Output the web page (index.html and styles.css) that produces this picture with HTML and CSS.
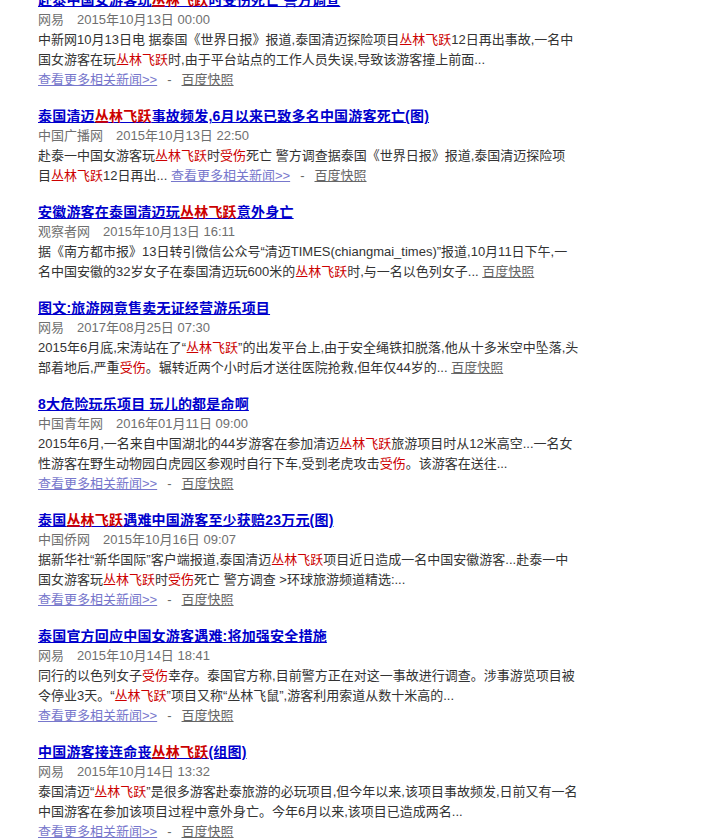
FILE: index.html
```html
<!DOCTYPE html>
<html lang="zh-CN">
<head>
<meta charset="utf-8">
<title>丛林飞跃 - 百度新闻搜索</title>
<link rel="stylesheet" href="styles.css">
</head>
<body>
<div class="results">

  <div class="result">
    <h3 class="title"><a href="#">赴泰中国女游客玩<em>丛林飞跃</em>时受伤死亡 警方调查</a></h3>
    <div class="meta"><span class="source">网易</span><span class="time">2015年10月13日 00:00</span></div>
    <div class="summary">中新网10月13日电 据泰国《世界日报》报道,泰国清迈探险项目<em>丛林飞跃</em>12日再出事故,一名中<br>国女游客在玩<em>丛林飞跃</em>时,由于平台站点的工作人员失误,导致该游客撞上前面...</div>
    <div class="links"><a class="more" href="#">查看更多相关新闻&gt;&gt;</a><span class="sep">-</span><a class="cache" href="#">百度快照</a></div>
  </div>

  <div class="result">
    <h3 class="title"><a href="#">泰国清迈<em>丛林飞跃</em>事故频发,6月以来已致多名中国游客死亡(图)</a></h3>
    <div class="meta"><span class="source">中国广播网</span><span class="time">2015年10月13日 22:50</span></div>
    <div class="summary">赴泰一中国女游客玩<em>丛林飞跃</em>时<em>受伤</em>死亡 警方调查据泰国《世界日报》报道,泰国清迈探险项<br>目<em>丛林飞跃</em>12日再出... <a class="more" href="#">查看更多相关新闻&gt;&gt;</a><span class="sep">-</span><a class="cache" href="#">百度快照</a></div>
  </div>

  <div class="result">
    <h3 class="title"><a href="#">安徽游客在泰国清迈玩<em>丛林飞跃</em>意外身亡</a></h3>
    <div class="meta"><span class="source">观察者网</span><span class="time">2015年10月13日 16:11</span></div>
    <div class="summary">据《南方都市报》13日转引微信公众号“清迈TIMES(chiangmai_times)”报道,10月11日下午,一<br>名中国安徽的32岁女子在泰国清迈玩600米的<em>丛林飞跃</em>时,与一名以色列女子... <a class="cache" href="#">百度快照</a></div>
  </div>

  <div class="result">
    <h3 class="title"><a href="#">图文:旅游网竟售卖无证经营游乐项目</a></h3>
    <div class="meta"><span class="source">网易</span><span class="time">2017年08月25日 07:30</span></div>
    <div class="summary">2015年6月底,宋涛站在了“<em>丛林飞跃</em>”的出发平台上,由于安全绳铁扣脱落,他从十多米空中坠落,头<br>部着地后,严重<em>受伤</em>。辗转近两个小时后才送往医院抢救,但年仅44岁的... <a class="cache" href="#">百度快照</a></div>
  </div>

  <div class="result">
    <h3 class="title"><a href="#">8大危险玩乐项目 玩儿的都是命啊</a></h3>
    <div class="meta"><span class="source">中国青年网</span><span class="time">2016年01月11日 09:00</span></div>
    <div class="summary">2015年6月,一名来自中国湖北的44岁游客在参加清迈<em>丛林飞跃</em>旅游项目时从12米高空...一名女<br>性游客在野生动物园白虎园区参观时自行下车,受到老虎攻击<em>受伤</em>。该游客在送往...</div>
    <div class="links"><a class="more" href="#">查看更多相关新闻&gt;&gt;</a><span class="sep">-</span><a class="cache" href="#">百度快照</a></div>
  </div>

  <div class="result">
    <h3 class="title"><a href="#">泰国<em>丛林飞跃</em>遇难中国游客至少获赔23万元(图)</a></h3>
    <div class="meta"><span class="source">中国侨网</span><span class="time">2015年10月16日 09:07</span></div>
    <div class="summary">据新华社“新华国际”客户端报道,泰国清迈<em>丛林飞跃</em>项目近日造成一名中国安徽游客...赴泰一中<br>国女游客玩<em>丛林飞跃</em>时<em>受伤</em>死亡 警方调查 &gt;环球旅游频道精选:...</div>
    <div class="links"><a class="more" href="#">查看更多相关新闻&gt;&gt;</a><span class="sep">-</span><a class="cache" href="#">百度快照</a></div>
  </div>

  <div class="result">
    <h3 class="title"><a href="#">泰国官方回应中国女游客遇难:将加强安全措施</a></h3>
    <div class="meta"><span class="source">网易</span><span class="time">2015年10月14日 18:41</span></div>
    <div class="summary">同行的以色列女子<em>受伤</em>幸存。泰国官方称,目前警方正在对这一事故进行调查。涉事游览项目被<br>令停业3天。“<em>丛林飞跃</em>”项目又称“丛林飞鼠”,游客利用索道从数十米高的...</div>
    <div class="links"><a class="more" href="#">查看更多相关新闻&gt;&gt;</a><span class="sep">-</span><a class="cache" href="#">百度快照</a></div>
  </div>

  <div class="result">
    <h3 class="title"><a href="#">中国游客接连命丧<em>丛林飞跃</em>(组图)</a></h3>
    <div class="meta"><span class="source">网易</span><span class="time">2015年10月14日 13:32</span></div>
    <div class="summary">泰国清迈“<em>丛林飞跃</em>”是很多游客赴泰旅游的必玩项目,但今年以来,该项目事故频发,日前又有一名<br>中国游客在参加该项目过程中意外身亡。今年6月以来,该项目已造成两名...</div>
    <div class="links"><a class="more" href="#">查看更多相关新闻&gt;&gt;</a><span class="sep">-</span><a class="cache" href="#">百度快照</a></div>
  </div>

</div>
</body>
</html>
```

FILE: styles.css
```css
html, body {
  margin: 0;
  padding: 0;
  background: #fff;
}

body {
  font-family: "Liberation Sans", Arial, "Noto Sans CJK SC", sans-serif;
  font-size: 13px;
  line-height: 20px;
  color: #333;
}

/* list is scrolled a little, so the first title is clipped at the top */
.results {
  margin: -10px 0 0 38px;
  width: 570px;
}

.result {
  margin-bottom: 16px;
}

.title {
  margin: 0;
  font-size: 14px;
  line-height: 20px;
  font-weight: bold;
  letter-spacing: 0.2px;
}

.title a {
  color: #0000cc;
  text-decoration: underline;
}

.title em {
  font-style: normal;
  color: #cc0000;
}

.meta {
  color: #6f6f6f;
}

.meta .source {
  margin-right: 13px;
}

.summary em {
  font-style: normal;
  color: #cc0000;
}

.more {
  color: #7777cc;
  text-decoration: underline;
}

.sep {
  color: #666;
  margin: 0 10px;
}

.cache {
  color: #666;
  text-decoration: underline;
}
```
